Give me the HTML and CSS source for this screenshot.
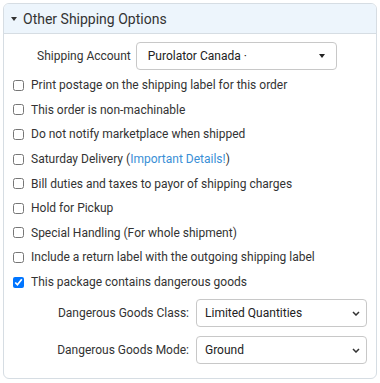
FILE: index.html
```html
<!DOCTYPE html>
<html>
<head>
<meta charset="utf-8">
<link rel="stylesheet" href="styles.css">
</head>
<body>
<div class="panel">
  <div class="panel-header">
    <span class="caret"></span>
    <span class="title">Other Shipping Options</span>
  </div>
  <div class="panel-body">
    <div class="account-row">
      <span class="account-label">Shipping Account</span>
      <div class="fake-select">
        <span>Purolator Canada ·</span>
        <span class="solid-caret"></span>
      </div>
    </div>
    <label class="check-row"><input type="checkbox"><span>Print postage on the shipping label for this order</span></label>
    <label class="check-row"><input type="checkbox"><span>This order is non-machinable</span></label>
    <label class="check-row"><input type="checkbox"><span>Do not notify marketplace when shipped</span></label>
    <label class="check-row"><input type="checkbox"><span>Saturday Delivery (<a class="link" href="#">Important Details!</a>)</span></label>
    <label class="check-row"><input type="checkbox"><span>Bill duties and taxes to payor of shipping charges</span></label>
    <label class="check-row"><input type="checkbox"><span>Hold for Pickup</span></label>
    <label class="check-row"><input type="checkbox"><span>Special Handling (For whole shipment)</span></label>
    <label class="check-row"><input type="checkbox"><span>Include a return label with the outgoing shipping label</span></label>
    <label class="check-row"><input type="checkbox" checked><span>This package contains dangerous goods</span></label>
    <div class="dg-grid">
      <span class="dg-label">Dangerous Goods Class:</span>
      <div class="dg-select">
        <span>Limited Quantities</span>
        <svg class="chev" width="8" height="5" viewBox="0 0 8 5"><path d="M1 1 L4 4 L7 1" fill="none" stroke="#333" stroke-width="1.5"/></svg>
      </div>
      <span class="dg-label">Dangerous Goods Mode:</span>
      <div class="dg-select">
        <span>Ground</span>
        <svg class="chev" width="8" height="5" viewBox="0 0 8 5"><path d="M1 1 L4 4 L7 1" fill="none" stroke="#333" stroke-width="1.5"/></svg>
      </div>
    </div>
  </div>
</div>
</body>
</html>
```

FILE: styles.css
```css
* { box-sizing: border-box; }
html, body { margin: 0; padding: 0; background: #fff; }
body {
  font-family: Roboto, "Liberation Sans", sans-serif;
  color: #333;
  font-size: 12px;
  padding: 3px;
}
.panel {
  width: 374px;
  height: 376px;
  border: 1px solid #d6dde3;
  border-radius: 6px;
  overflow: hidden;
}
.panel-header {
  height: 30px;
  background: #edf5fc;
  border-bottom: 1px solid #d6dde3;
  display: flex;
  align-items: center;
  padding-left: 7px;
  gap: 6px;
}
.caret {
  width: 0; height: 0;
  border-left: 3px solid transparent;
  border-right: 3px solid transparent;
  border-top: 4px solid #333;
  margin-top: 1px;
}
.title { font-size: 14px; color: #333; }
.panel-body {
  padding: 8px 0 0 9px;
  display: flex;
  flex-direction: column;
}
.account-row {
  display: flex;
  align-items: center;
  gap: 5px;
  padding-left: 24px;
  margin-bottom: 3px;
}
.fake-select {
  width: 201px;
  height: 28px;
  border: 1px solid #c8c8c8;
  border-radius: 4px;
  display: flex;
  align-items: center;
  justify-content: space-between;
  padding: 0 11px 0 11px;
  color: #222;
}
.solid-caret {
  width: 0; height: 0;
  border-left: 3.5px solid transparent;
  border-right: 3.5px solid transparent;
  border-top: 4px solid #222;
}
.check-row {
  display: flex;
  align-items: center;
  height: 24.6px;
  gap: 7px;
}
.check-row input {
  margin: 0;
  width: 11px;
  height: 11px;
}
.link { color: #3a8fd6; text-decoration: none; }
.dg-grid {
  display: grid;
  grid-template-columns: 176px 171px;
  column-gap: 7px;
  row-gap: 9px;
  align-items: center;
  margin-top: 5px;
}
.dg-label { text-align: right; }
.dg-select {
  height: 28px;
  border: 1px solid #c8c8c8;
  border-radius: 4px;
  display: flex;
  align-items: center;
  justify-content: space-between;
  padding: 0 6px 0 8px;
  color: #222;
}
.chev { display: block; }
```
